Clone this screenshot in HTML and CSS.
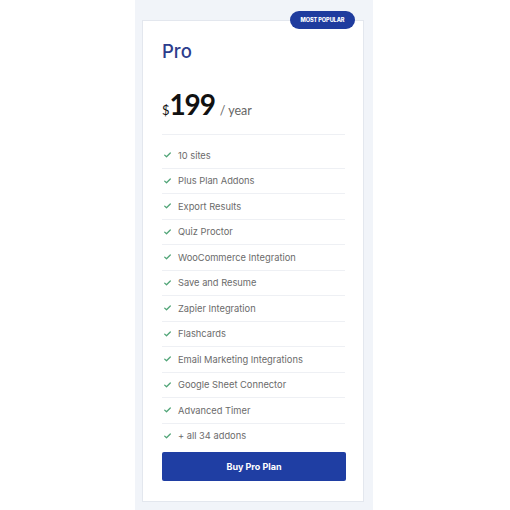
FILE: index.html
```html
<!DOCTYPE html>
<html>
<head>
<meta charset="utf-8">
<link rel="stylesheet" href="styles.css">
</head>
<body>
<div class="panel">
  <div class="card">
    <span class="badge">MOST POPULAR</span>
    <h2 class="plan">Pro</h2>
    <div class="price">
      <span class="cur">$</span><span class="amount">199</span><span class="per">/ year</span>
    </div>
    <ul class="features">
      <li><svg class="check" viewBox="0 0 10 8"><path d="M1 4.2 L3.6 6.6 L9 1.2" /></svg>10 sites</li>
      <li><svg class="check" viewBox="0 0 10 8"><path d="M1 4.2 L3.6 6.6 L9 1.2" /></svg>Plus Plan Addons</li>
      <li><svg class="check" viewBox="0 0 10 8"><path d="M1 4.2 L3.6 6.6 L9 1.2" /></svg>Export Results</li>
      <li><svg class="check" viewBox="0 0 10 8"><path d="M1 4.2 L3.6 6.6 L9 1.2" /></svg>Quiz Proctor</li>
      <li><svg class="check" viewBox="0 0 10 8"><path d="M1 4.2 L3.6 6.6 L9 1.2" /></svg>WooCommerce Integration</li>
      <li><svg class="check" viewBox="0 0 10 8"><path d="M1 4.2 L3.6 6.6 L9 1.2" /></svg>Save and Resume</li>
      <li><svg class="check" viewBox="0 0 10 8"><path d="M1 4.2 L3.6 6.6 L9 1.2" /></svg>Zapier Integration</li>
      <li><svg class="check" viewBox="0 0 10 8"><path d="M1 4.2 L3.6 6.6 L9 1.2" /></svg>Flashcards</li>
      <li><svg class="check" viewBox="0 0 10 8"><path d="M1 4.2 L3.6 6.6 L9 1.2" /></svg>Email Marketing Integrations</li>
      <li><svg class="check" viewBox="0 0 10 8"><path d="M1 4.2 L3.6 6.6 L9 1.2" /></svg>Google Sheet Connector</li>
      <li><svg class="check" viewBox="0 0 10 8"><path d="M1 4.2 L3.6 6.6 L9 1.2" /></svg>Advanced Timer</li>
      <li><svg class="check" viewBox="0 0 10 8"><path d="M1 4.2 L3.6 6.6 L9 1.2" /></svg>+ all 34 addons</li>
    </ul>
    <button class="buy">Buy Pro Plan</button>
  </div>
</div>
</body>
</html>
```
FILE: styles.css
```css
html, body {
  margin: 0;
  padding: 0;
  background: #ffffff;
}
body {
  width: 510px;
  height: 510px;
  overflow: hidden;
  font-family: Inter, "Noto Sans", sans-serif;
}
.panel {
  margin-left: 135px;
  width: 238px;
  height: 510px;
  box-sizing: border-box;
  background: #f1f4f9;
  padding: 20px 9px 0 7px;
}
.card {
  position: relative;
  background: #ffffff;
  border: 1px solid #e3e7ee;
  box-sizing: border-box;
  width: 222px;
  height: 482px;
  padding: 18px 18px 0 19px;
}
.badge {
  position: absolute;
  top: -10px;
  right: 8px;
  width: 65px;
  height: 18px;
  border-radius: 9px;
  background: #1f3c9e;
  color: #ffffff;
  font-size: 5.6px;
  font-weight: 800;
  line-height: 18px;
  text-align: center;
  letter-spacing: -0.1px;
}
.plan {
  margin: 0;
  font-size: 18.5px;
  line-height: 24px;
  font-weight: 500;
  color: #2c3d8c;
}
.price {
  margin-top: 24px;
  display: flex;
  align-items: baseline;
  padding-bottom: 13px;
  border-bottom: 1px solid #eef0f4;
  font-family: Lato, "Open Sans", sans-serif;
  color: #111;
}
.cur {
  font-size: 13px;
  margin-right: 0;
}
.amount {
  font-size: 28px;
  line-height: 34px;
  font-weight: 700;
  letter-spacing: -1.2px;
}
.per {
  font-size: 12.5px;
  color: #666;
  margin-left: 5px;
}
.features {
  list-style: none;
  margin: 8px 0 0 0;
  padding: 0;
}
.features li {
  display: flex;
  align-items: center;
  height: 24.5px;
  border-bottom: 1px solid #eef0f4;
  font-size: 9.3px;
  color: #6b6b6b;
  padding-left: 2px;
}
.features li:last-child {
  border-bottom: none;
}
.check {
  width: 7px;
  height: 6px;
  margin-right: 7px;
  fill: none;
  stroke: #4fa476;
  stroke-width: 1.8;
  stroke-linecap: round;
  stroke-linejoin: round;
}
.buy {
  display: block;
  margin-top: 4px;
  width: 184px;
  height: 29px;
  border: none;
  border-radius: 2px;
  background: #1f3ea3;
  color: #ffffff;
  font-family: Inter, "Noto Sans", sans-serif;
  font-size: 9px;
  font-weight: 700;
}
```
